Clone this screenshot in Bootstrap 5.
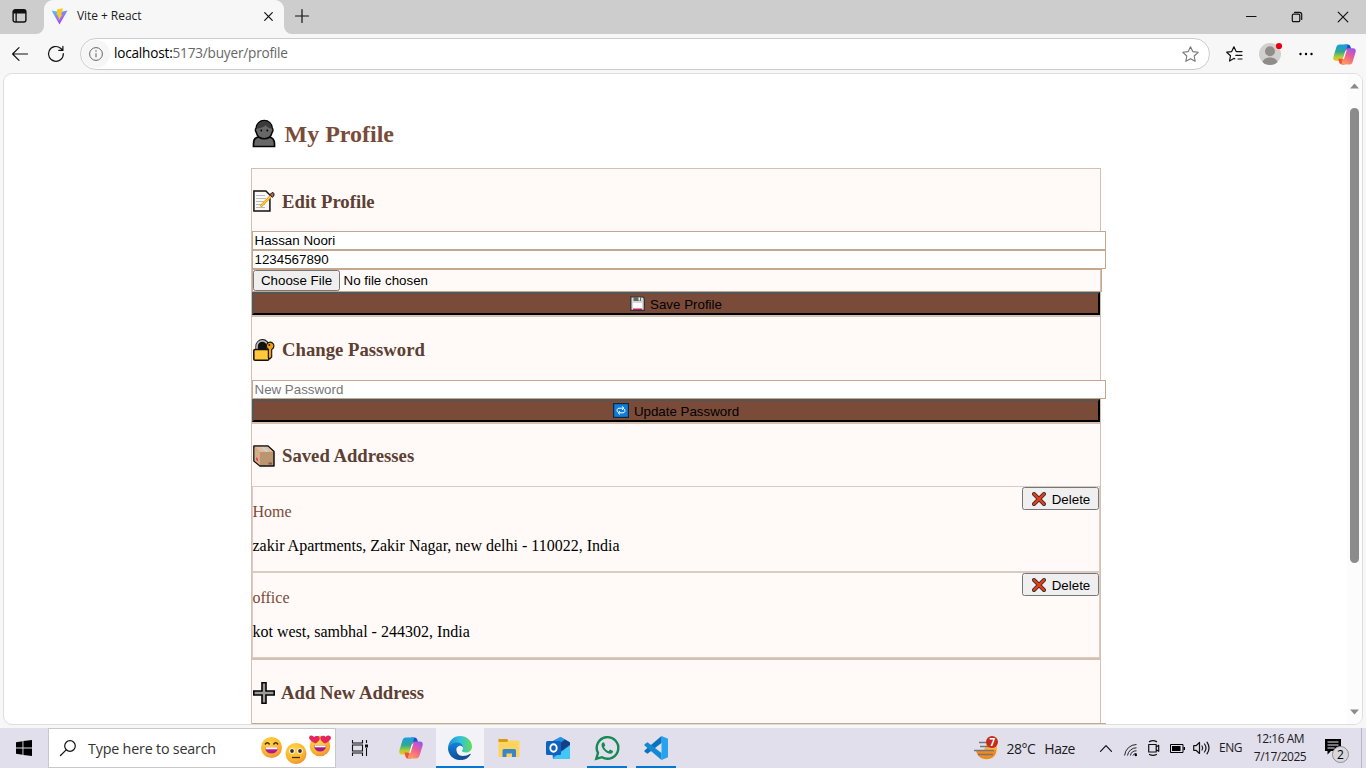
<!DOCTYPE html>
<html lang="en">
<head>
<meta charset="utf-8">
<title>Vite + React</title>
<link href="https://cdn.jsdelivr.net/npm/bootstrap@5.3.0/dist/css/bootstrap.min.css" rel="stylesheet">
<style>
html,body{height:100%;overflow:hidden}
body{background:#f7f7f7;font-family:"Open Sans","Noto Sans",sans-serif;color:#1b1b1b}
svg{display:block;flex:none;overflow:visible}
.shell{width:1366px;height:768px}
.ic{display:flex;align-items:center;justify-content:center;flex:none}
.ln{fill:none;stroke:#111;stroke-width:1.2;stroke-linecap:round;stroke-linejoin:round}
.tabstrip{height:34px;background:#cdcdcd}
.lefttab{width:44px;background:#cdcdcd;border-bottom-right-radius:8px}
.leftwrap,.rightwrap{background:#f7f7f7}
.apptab{width:240px;background:#f7f7f7;border-radius:9px 9px 0 0;font-size:12px;letter-spacing:-.06px}
.afttab{background:#cdcdcd;border-bottom-left-radius:8px}
.toolbar{height:39px;padding-top:1px}
.omnibox{width:1130px;height:32px;border:1px solid #ccc;border-radius:16px;background:#fff;font-size:13.6px;letter-spacing:-.2px;color:#666}
.infodot{width:28px;height:28px;border-radius:50%;background:#f6f6f6}
.viewport-box{height:652px;margin:0 3px;border:1px solid #dedede;border-radius:9px;background:#fff;overflow:hidden}
.scrollgutter{width:15px;background:#fcfcfc}
.thumbbar{width:9px;height:455px;border-radius:5px;background:#8b8b8b}
.doc{width:850px;margin-left:247px;padding-top:43px;font-family:"Liberation Serif",serif;font-size:16px;color:#000}
.doc h2{font-size:24px;font-weight:700;color:#7b4b3a;margin:0;height:34px;line-height:34px}
.panel{width:850px;border:1px solid #d4bfb3;background:#fffaf7}
.panel h3{font-size:18.72px;font-weight:700;color:#5c4033;margin:0;height:62px;padding-left:1px}
.panel h3 svg{margin-right:7px;margin-top:2px}
.panel h3 span{padding-top:4px}
.panel h3.tall{height:63px}
.doc input,.filebox{display:block;border:1px solid #c4a78e;font:13.333px/15px "Liberation Sans",sans-serif;color:#000}
.doc input{width:854px;height:19px;padding:1px 2px 1px 1.5px;background:#fff;border-radius:0;outline:0}
.doc input::placeholder{color:#757575;opacity:1}
.filebox{width:850px;height:23px}
.grey-btn{background:#efefef;border:1px solid #767676;border-radius:2.5px;font:13.333px/15px "Liberation Sans",sans-serif;color:#000;padding:0}
.choose{width:87px;height:21px}
.wide-btn{width:848px;height:23px;border:2px solid;border-color:#555 #000 #000 #555;background:#7b4b3a;font:13.333px/15px "Liberation Sans",sans-serif;color:#000;padding:0}
.wide-btn span,.del span{padding-top:2px}
.addr{height:86px;border:1px solid #dccbc1;line-height:18px}
.addr p{margin:0 0 16px}
.addr-text{padding-top:16px;margin-left:-.5px}
.del{width:77px;height:23px}
.taskbar{height:40px;background:#e2dfed}
.search-box{width:288px;height:40px;background:#fff;border:1px solid #c8c8c8;font-size:14.3px;letter-spacing:-.19px;color:#333}
.app{width:48px;height:40px;margin-right:1px;border-bottom:2px solid transparent;padding-top:2px}
.app.current{background:#f3f2f9;border-color:#0078d4}
.app.open i{display:block}
.app i{display:none;position:absolute;bottom:-2px;left:4px;width:40px;height:2px;background:#0078d4}
.traytxt{font-size:14px;letter-spacing:-.5px}
.clock{width:64px;font-size:12px;line-height:18px;letter-spacing:-.5px;text-align:center;white-space:nowrap}
</style>
</head>
<body>
<svg width="0" height="0" class="position-absolute">
<defs>
<linearGradient id="cpA" x1="0" y1="0" x2="0" y2="1"><stop offset="0" stop-color="#159ee8"/><stop offset=".45" stop-color="#2fa98f"/><stop offset=".75" stop-color="#a9cc3c"/><stop offset="1" stop-color="#f5c518"/></linearGradient>
<linearGradient id="cpB" x1=".8" y1="0" x2=".3" y2="1"><stop offset="0" stop-color="#9a55ee"/><stop offset=".5" stop-color="#ec5f92"/><stop offset="1" stop-color="#ff9a5a"/></linearGradient>
<symbol id="copilot" viewBox="0 0 24 22">
<path d="M12 .5h3.500c1.700 0 2.400 1 2.900 2.600L19.300 6H16c-1.500 0-2.500-1-3-2.500z" fill="#1a4fcb"/>
<path d="M7 .5h6.500c1.500 0 1.700.7 1.300 2L11.500 14c-.8 2.500-1.700 3.500-3.500 3.500H3c-2.500 0-3.300-1.800-2.500-4.500L3.400 3.500C4 1.500 5 .5 7 .5z" fill="url(#cpA)"/>
<path d="M5.500 15.500h3c1.600 0 2.200 1 2.700 2.500l1.100 3.500H9.500c-2 0-2.700-1-3.200-2.600z" fill="#f0533c"/>
<path d="M17 21.500h-6.500c-1.500 0-1.700-.7-1.300-2L12.500 8c.8-2.500 1.700-3.500 3.500-3.500h5c2.500 0 3.300 1.800 2.500 4.500l-2.900 9.500c-.6 2-1.600 3-3.600 3z" fill="url(#cpB)"/>
<path d="M10.600 14.500 12.500 8.300c.4-1.300 1-1.800 2-1.800-.4.700-.8 1.900-1.100 3l-1.500 5c-.3 1-.6 1.500-1.500 1.500-.1-.4 0-.9.200-1.500z" fill="#fff"/>
</symbol>
<radialGradient id="face" cx=".4" cy=".3" r=".8"><stop offset="0" stop-color="#ffd54a"/><stop offset=".6" stop-color="#fbb829"/><stop offset="1" stop-color="#f0803c"/></radialGradient>
<linearGradient id="vt" x1="0" y1="0" x2=".6" y2="1"><stop offset="0" stop-color="#41d1ff"/><stop offset="1" stop-color="#bd34fe"/></linearGradient>
<linearGradient id="ed" x1="0" y1="0" x2="1" y2="0"><stop offset="0" stop-color="#1a8fd8"/><stop offset=".5" stop-color="#2fc2df"/><stop offset="1" stop-color="#66dc55"/></linearGradient>
<linearGradient id="ed2" x1="0" y1="0" x2="0" y2="1"><stop offset="0" stop-color="#1583d8"/><stop offset="1" stop-color="#0b4d9c"/></linearGradient>
<symbol id="cross" viewBox="0 0 14 14"><path d="M2 2l10 10M12 2 2 12" stroke="#333" stroke-width="3.900" stroke-linecap="round"/><path d="M2 2l10 10M12 2 2 12" stroke="#f03a17" stroke-width="2.300" stroke-linecap="round"/></symbol>
</defs>
</svg>
<div class="shell d-flex flex-column">
  <header class="tabstrip d-flex">
    <div class="leftwrap"><div class="lefttab h-100 ic">
      <svg width="15" height="14" viewBox="0 0 15 14" style="margin-left:-5px;margin-top:-2px"><rect x="1.100" y=".8" width="12.800" height="12.200" rx="2" fill="none" stroke="#111" stroke-width="1.400"/><path d="M1 4V2.500Q1 1 2.500 1h10Q14 1 14 2.500V4.500H1zM3.500 4h1.300v9H3.500z" fill="#111"/></svg>
    </div></div>
    <div class="apptab d-flex align-items-center">
      <svg width="17" height="17" viewBox="0 0 17 17" style="margin-left:7px;margin-top:-1px"><path d="M.5 2.500 8.500 16.500 16.500 2.500 8.500 4z" fill="url(#vt)"/><path d="M11.800.2 6 1.400 5.700 7.500l1.600-.3-.5 2.500 1.200-.3-.5 3.400 4-6.400-1.700.3 1.600-3.500z" fill="#ffc81f"/></svg>
      <span style="margin-left:9px;margin-top:-2px">Vite + React</span>
      <svg class="ms-auto" width="9" height="9" viewBox="0 0 9 9" style="margin-right:11px;margin-top:-1px"><path class="ln" stroke-width="1.400" d="M.7.7l7.600 7.600M8.300.7.7 8.300"/></svg>
    </div>
    <div class="rightwrap flex-grow-1"><div class="afttab h-100 d-flex align-items-center">
      <svg width="14" height="14" viewBox="0 0 14 14" style="margin-left:11px;margin-top:-3px"><path class="ln" d="M7 .5v13M.5 7h13"/></svg>
      <div class="ms-auto d-flex" style="margin-top:-1px">
        <div class="ic" style="width:46px"><svg width="10" height="10"><path class="ln" d="M.5 4.500h9.500"/></svg></div>
        <div class="ic" style="width:46px"><svg width="10" height="10" viewBox="0 0 10 10"><rect class="ln" x=".3" y="2.200" width="7.500" height="7.500" rx="1.300"/><path class="ln" d="M2.500.3H7.500Q9.700.3 9.700 2.500V7.500"/></svg></div>
        <div class="ic" style="width:46px"><svg width="10" height="10" viewBox="0 0 10 10"><path class="ln" d="M.2.2l9.600 9.600M9.800.2.2 9.800"/></svg></div>
      </div>
    </div></div>
  </header>
  <nav class="toolbar d-flex align-items-center">
    <div class="ic" style="width:40px"><svg width="16" height="14" viewBox="0 0 16 14"><path class="ln" d="M15.500 7H.7M7 .6.6 7 7 13.400"/></svg></div>
    <div class="ic" style="width:32px"><svg width="16" height="16" viewBox="0 0 16 16"><path class="ln" d="M15.300 7.500A7.400 7.400 0 1 1 12.600 2.200L14.800 4.200M14.900.3V4.400H10.800"/></svg></div>
    <div class="omnibox d-flex align-items-center" style="margin-left:8px">
      <span class="infodot ic" style="margin-left:1px"><svg width="14" height="14" viewBox="0 0 14 14"><circle cx="7" cy="7" r="6.400" fill="none" stroke="#666"/><path d="M7 6.200v4" stroke="#666" stroke-width="1.100"/><circle cx="7" cy="4" r=".8" fill="#666"/></svg></span>
      <span style="margin-left:4px;margin-top:-1px"><span class="text-black">localhost:</span>5173/buyer/profile</span>
      <svg class="ms-auto" width="17" height="16" viewBox="0 0 17 16" style="margin-right:10px"><path fill="none" stroke="#777" stroke-width="1.100" stroke-linejoin="round" d="M8.500.7l2.300 4.900 5.400.7-4 3.700 1 5.300-4.700-2.600-4.700 2.600 1-5.300-4-3.700 5.400-.7z"/></svg>
    </div>
    <div class="ic" style="width:48px"><svg width="17" height="16" viewBox="0 0 17 16"><path class="ln" d="M8.800 12.800 7.800 12.400 3.500 15l1-5.200L.7 6.200l5-.6L7.900.8l2 4.300M10.300 5.600H16M9.800 9.300H16M12 13H16"/></svg></div>
    <div class="ic" style="width:24px"><svg width="22" height="22" viewBox="0 0 22 22"><clipPath id="av"><circle cx="11" cy="11" r="11"/></clipPath><circle cx="11" cy="11" r="11" fill="#d2d0ce"/><g clip-path="url(#av)" fill="#8f8c89"><circle cx="11" cy="8.300" r="5"/><path d="M3 22c0-5 3-7.500 8-7.500s8 2.500 8 7.500z"/></g><circle cx="20" cy="3" r="3.100" fill="#e60012"/></svg></div>
    <div class="ic" style="width:48px"><svg width="14" height="4" viewBox="0 0 14 4"><circle cx="1.500" cy="2" r="1.200"/><circle cx="7" cy="2" r="1.200"/><circle cx="12.500" cy="2" r="1.200"/></svg></div>
    <div class="ic" style="width:28px"><svg width="23" height="21"><use href="#copilot"/></svg></div>
  </nav>
  <div class="viewport-box d-flex">
    <main class="flex-grow-1 overflow-hidden"><div class="doc">
      <h2 class="d-flex align-items-center"><svg width="27" height="28" viewBox="0 0 27 28" style="margin-right:6.500px"><path d="M2.500 26.500V24c0-5 2.500-7 6-7h8.500c4 0 6.500 2 6.500 7v2.500z" fill="#686767" stroke="#050505" stroke-width="1.700"/><path d="M5.200 8a8 7.500 0 0 1 16 0c1.200 1 .8 3.200 0 4.200-1 4-4 6.500-8 6.500s-7-2.500-8-6.500c-.8-1-1.200-3.200 0-4.200z" fill="#686767" stroke="#050505" stroke-width="1.500"/><path d="M5.700 8.500C6 3.500 9.200 1.500 13.200 1.500c4.400 0 7.300 2.600 7.500 7-3-.5-5-1.800-6-3.600C12.800 7.500 8.500 8 5.700 8.500z" fill="#3a3a3a"/><circle cx="10.300" cy="10.500" r=".9" fill="#000"/><circle cx="16.300" cy="10.500" r=".9" fill="#000"/></svg><span>My Profile</span></h2>
      <section class="panel" style="margin-top:17px;height:148px">
        <h3 class="d-flex align-items-center"><svg width="22" height="22" viewBox="0 0 22 22"><path d="M.9 1h12l4 4v16H.9z" fill="#f8f8f8" stroke="#111" stroke-width="1.500"/><path d="M3 5.500h9M3 8.500h10M3 11.500h9M3 14.500h9M3 17.500h9" stroke="#bbb"/><path d="M7.500 16.500 18 6" stroke="#e9a923" stroke-width="2.600"/><path d="M8 16.200 17.500 6.500" stroke="#ffd65c" stroke-width="1"/><path d="M17 4.500 18.500 3q2-1.300 2.500.8L20.800 6l-1.500 1.300z" fill="#b66" stroke="#111"/></svg><span>Edit Profile</span></h3>
        <input value="Hassan Noori"><input value="1234567890">
        <div class="filebox d-flex align-items-center"><button class="grey-btn choose">Choose File</button><span style="margin-left:3.500px">No file chosen</span></div>
        <button class="wide-btn d-flex align-items-center justify-content-center"><svg width="15" height="15" viewBox="0 0 15 15" style="margin-right:5px"><path d="M.8.8h12l1.500 1.500v12H.8z" fill="#d8d8d8" stroke="#333" stroke-width="1.300"/><path d="M3.500 1h7.500v4H3.500z" fill="#666"/><path d="M8.500 1.500h1.500v3H8.500z" fill="#eee"/><path d="M3 7h9v6H3z" fill="#fff"/><path d="M3 12.500h9V14H3z" fill="#c2185b"/></svg><span>Save Profile</span></button>
      </section>
      <section class="panel" style="height:107px">
        <h3 class="tall d-flex align-items-center"><svg width="22" height="22" viewBox="0 0 22 22"><path d="M4.500 11V7.300a5 5.200 0 0 1 10 0V11" fill="#111" stroke="#111" stroke-width="4.200"/><path d="M4 11V7.300a5.300 5.500 0 0 1 10.600 0V11" fill="none" stroke="#b8b8b8" stroke-width="1.700"/><rect x=".8" y="10.500" width="15" height="10.700" rx="1.300" fill="#ffc83d" stroke="#111" stroke-width="1.500"/><path d="M15.500 3.500a3.800 3.800 0 1 1 3.200 6.900V18l-1.900 2-1.500-1.500v-8.300A3.800 3.800 0 0 1 15.500 3.500z" fill="#f0a30a" stroke="#111" stroke-width="1.100"/><circle cx="16.300" cy="6" r="1" fill="#222"/></svg><span>Change Password</span></h3>
        <input placeholder="New Password">
        <button class="wide-btn d-flex align-items-center justify-content-center"><svg width="16" height="15" viewBox="0 0 16 15" style="margin-right:5px"><rect x=".6" y=".6" width="14.800" height="13.800" fill="#0f7ddb" stroke="#16263a" stroke-width="1.200"/><path d="M4.500 9Q3.200 5.500 6 5.200h4.500M9 3.500l2 1.700L9 7M11.500 6q1.300 3.500-1.500 3.800H5.500M7 8 5 9.800l2 1.700" fill="none" stroke="#fff"/></svg><span>Update Password</span></button>
      </section>
      <section class="panel" style="height:236px">
        <h3 class="d-flex align-items-center"><svg width="22" height="22" viewBox="0 0 22 22"><path d="M.9 1 15 1l6 5.500V21H7L.9 16z" fill="#bd9470" stroke="#111" stroke-width="1.500" stroke-linejoin="round"/><path d="M1.600 1.700 14.700 1.700 20.200 6.700 7 7z" fill="#e0bd9c"/><path d="M1.600 1.900 7 7v13.200L1.600 15.700z" fill="#d5ad8b"/><path d="M7.500 2h3.200l5.500 4.800h-3.500z" fill="#c9d2d5"/><path d="M3 12l2 1.500v3L3 15z" fill="#e74856"/><path d="M15.500 17.500h3.500v2h-3.500z" fill="#805f49"/></svg><span style="padding-top:3px">Saved Addresses</span></h3>
        <div class="addr d-flex align-items-start justify-content-between"><div class="addr-text"><p style="color:#7b4b3a">Home</p><p>zakir Apartments, Zakir Nagar, new delhi - 110022, India</p></div><button class="grey-btn del d-flex align-items-center justify-content-center"><svg width="14" height="14" style="margin:1px 6px 0 1px"><use href="#cross"/></svg><span>Delete</span></button></div>
        <div class="addr d-flex align-items-start justify-content-between"><div class="addr-text"><p style="color:#7b4b3a">office</p><p>kot west, sambhal - 244302, India</p></div><button class="grey-btn del d-flex align-items-center justify-content-center"><svg width="14" height="14" style="margin:1px 6px 0 1px"><use href="#cross"/></svg><span>Delete</span></button></div>
      </section>
      <section class="panel" style="height:150px">
        <h3 class="tall d-flex align-items-center"><svg width="22" height="22" viewBox="0 0 22 22" style="margin-right:6px"><path d="M9 .8h4V9h8.200v4H13v8.200H9V13H.8V9H9z" fill="#9b9b9b" stroke="#050505" stroke-width="1.600"/></svg><span>Add New Address</span></h3>
        <input>
      </section>
    </div></main>
    <aside class="scrollgutter d-flex flex-column align-items-center flex-shrink-0">
      <svg width="9" height="6" style="margin-top:9px"><path d="M0 5.500 4.500.5 9 5.500z" fill="#8b8b8b"/></svg>
      <div class="thumbbar" style="margin-top:19px"></div>
      <svg width="9" height="6" class="mt-auto" style="margin-bottom:9px"><path d="M0 .5h9L4.500 5.500z" fill="#8b8b8b"/></svg>
    </aside>
  </div>
  <footer class="taskbar d-flex align-items-stretch mt-auto">
    <div class="ic" style="width:48px"><svg width="16" height="16" viewBox="0 0 16 16"><path d="M0 2.200 6.500 1.200V7.500H0zM7.400 1.100 16 0v7.500H7.400zM0 8.400h6.500v6.300L0 13.800zM7.400 8.400H16V16l-8.600-1.100z"/></svg></div>
    <div class="search-box d-flex align-items-center">
      <svg width="16" height="16" viewBox="0 0 16 16" style="margin-left:11px"><circle class="ln" cx="10" cy="6" r="5.300"/><path class="ln" d="M6.200 9.800.5 15.500"/></svg>
      <span style="margin-left:12px;margin-top:2px">Type here to search</span>
      <svg class="ms-auto" width="70" height="30" viewBox="0 0 70 30" style="margin-right:4px"><g fill="url(#face)"><circle cx="10.500" cy="14.500" r="10.500"/><circle cx="35" cy="20.500" r="10.500"/><circle cx="59" cy="13" r="10.300"/></g><path d="M4 11.500q2.300-3.500 4.600 0M12.400 11.500q2.300-3.500 4.600 0" fill="none" stroke="#50261f" stroke-width="1.500"/><path d="M3.800 14.500h13.400q-1 6-6.700 6t-6.700-6z" fill="#b3188c"/><path d="M4.500 14.300h12v2h-12z" fill="#fff"/><circle cx="31" cy="18" r="2.800" fill="#fff"/><circle cx="39" cy="18" r="2.800" fill="#fff"/><circle cx="31" cy="18" r="1.900" fill="#402a32"/><circle cx="39" cy="18" r="1.900" fill="#402a32"/><path d="M31 24.500h8" stroke="#402a32" stroke-width="1.300"/><path d="M54.500 10.500C47 7 47.500 4 49 3s3.500 0 4 1.300c1-1.500 4-2 5.300-.3s-.4 4.500-3.800 6.500zM64 10.500C60 8.500 58.500 5.500 59.800 3.800s4-1.300 4.700.2c1-1.500 3.500-2 4.800-.8S70.500 7.500 64 10.500z" fill="#e5255f"/><path d="M52.700 12.500h12.800q-1 6-6.400 6t-6.400-6z" fill="#a4188c"/><path d="M53.500 12.500h11.200v1.800H53.500z" fill="#fff"/></svg>
    </div>
    <div class="ic" style="width:51px;padding-right:3px"><svg width="16" height="16" viewBox="0 0 16 16"><path d="M.5 0v3h10V0M.5 16v-3h10v3M.5 5h10v6H.5zM14.500 0v3M14.500 8v8" fill="none" stroke="#111" stroke-width="1.100"/><path d="M13 4.500h3v3h-3z" fill="#111"/></svg></div>
    <div class="app ic"><svg width="24" height="22"><use href="#copilot"/></svg></div>
    <div class="app ic current"><svg width="24" height="24" viewBox="0 0 24 24"><path d="M0 12C.5 4.500 6 0 12 0c7 0 12 5 12 10.500 0 4-3 6-6 6-2.500 0-4-.8-4-1.700 0-.7 1-1.200 1-3C15 9 12.500 7.500 9.500 7.500 5 7.500 1.500 9.500 0 12z" fill="url(#ed)"/><path d="M0 12C1 9 4.500 6.500 9 6.500c3.500 0 6 2 6 5-1-1.500-2.500-2-4-1.500-2.500 1-3.500 4-2.500 7 1 3.500 3.500 6 6.500 6.500C6.500 25.500 0 19.500 0 12z" fill="url(#ed2)"/><path d="M9 12.500c-1.500 4 1.500 7.500 6 7.500 2.500 0 4.800-.8 7-2.200.5-.3.900.1.600.6C20.500 22 17.500 23.700 14 23.900 9 22 6.500 17 9 12.500z" fill="#115095"/></svg></div>
    <div class="app ic"><svg width="22" height="18" viewBox="0 0 22 18"><path d="M.5.5Q.5 0 1 0h8l1.500 1.500H21q.5 0 .5.500v15q0 1-1 1h-19q-1 0-1-1z" fill="#ffd35e"/><path d="M.5 0h8.700l1 1.500-1 1.500H.5z" fill="#d99a13"/><path d="M4.500 18v-6.500q0-1.500 1.500-1.500h10.500q1.500 0 1.500 1.500V18h-4v-3.500H8.500V18z" fill="#3786c8"/></svg></div>
    <div class="app ic"><svg width="24" height="22" viewBox="0 0 24 22"><path d="M5 6q0-1 1-1.600L13.500.4q1-.5 2 0L23 4.800q1 .6 1 1.700V20q0 2-2 2H7z" fill="#1577d2"/><path d="M24 5.500v3L16 14 8 8l10-6z" fill="#123f86"/><path d="M6 4.500 14.500 0 19 2.500 10 9z" fill="#2593e5"/><path d="M24 8v12q0 2-2 2H8.500q-1.500 0-1.500-1z" fill="#42c6f5"/><rect y="4" width="15" height="14" rx="1.500" fill="#0f63be"/><ellipse cx="7.500" cy="11" rx="3.200" ry="3.700" fill="none" stroke="#fff" stroke-width="1.900"/></svg></div>
    <div class="app ic open position-relative"><svg width="24" height="24" viewBox="0 0 24 24"><path d="M1.300 22.700 3 17A10.800 10.800 0 1 1 7 21.200z" fill="none" stroke="#168a53" stroke-width="2.400"/><path d="M8.300 6.300c-.9.300-1.800 1.200-1.800 2.700 0 4 5 8.700 9 8.700 1.600 0 2.500-1.200 2.500-2.700l-3-1.500-1.500 1.700c-2-.8-3.600-2.400-4.500-4.200L10.300 9.500 9.200 6.700q-.2-.5-.9-.4z" fill="#168a53"/></svg><i></i></div>
    <div class="app ic open position-relative"><svg width="24" height="24" viewBox="0 0 24 24"><path d="M17.500 0 24 2.700v18.600L17.500 24z" fill="#27a2ee"/><path d="M17.500 0v7L3.500 17.800.5 15.700v-1.200z" fill="#0b72bd"/><path d="M17.500 24v-7L3.500 6.200.5 8.300v1.200z" fill="#1389d3"/></svg><i></i></div>
    <div class="ms-auto d-flex align-items-stretch">
      <div class="d-flex align-items-center traytxt" style="width:120px">
        <svg width="26" height="24" viewBox="0 0 26 24" style="margin-left:1px;margin-right:6.500px"><path d="M2 14h20.500c0 5-4 9.300-10 9.300S2.500 19 2 14z" fill="#f18b1c"/><path d="M14 5h6l3 6v3H10z" fill="#fbb13a"/><path d="M5 6.500h9M6 10.500h15M0 14.500h20M4 18.500h15" stroke="#77747a" stroke-width="1.600"/><circle cx="18" cy="6" r="6" fill="#c42b1c"/><text x="18" y="9.600" font-size="10" font-weight="700" fill="#fff" text-anchor="middle">7</text></svg>
        <span>28°C</span><span style="margin-left:9px">Haze</span></div>
      <div class="ic" style="width:25px"><svg width="12" height="7"><path class="ln" d="M.5 6.300 6 .7l5.500 5.600"/></svg></div>
      <div class="ic" style="width:24px"><svg width="13" height="13" viewBox="0 0 13 13" style="margin-top:2px"><g fill="none" stroke="#222"><path d="M.6 12.500A12 12 0 0 1 12.500 1.500M3.500 12.500a9 9 0 0 1 9-7.700M6.400 12.500a6 6 0 0 1 6.100-4.700M9 12.500a3.300 3.300 0 0 1 3.500-2"/></g><circle cx="11.800" cy="12" r="1.200"/></svg></div>
      <div class="ic" style="width:23px"><svg width="12" height="16" viewBox="0 0 12 16"><path class="ln" d="M.7 4.500h7.500v7.500H.7zM8.200 7l2.500-1.700v6L8.200 9.700M1.500 1.600Q5-.3 8.500 1.600M1.500 14.500q3.500 1.800 7 0"/></svg></div>
      <div class="ic" style="width:24px"><svg width="15" height="9" viewBox="0 0 15 9"><path d="M.5.5h12.500v8H.5z" fill="none" stroke="#000"/><path d="M2 2h8.500v5H2zM13.500 3H15v3h-1.500z"/></svg></div>
      <div class="ic" style="width:24px"><svg width="17" height="14" viewBox="0 0 17 14"><path class="ln" d="M.7 4.700H3L6.500 1.500v11L3 9.300H.7zM9 5q1.500 2 0 4M11.500 3q3 4 0 8M14 1.200q4 5.800 0 11.600"/></svg></div>
      <div class="ic" style="width:35px;font-size:12px;letter-spacing:-.5px">ENG</div>
      <div class="clock" style="padding-top:2px">12:16 AM<br>7/17/2025</div>
      <div class="ic" style="width:49px"><svg width="26" height="24" viewBox="0 0 26 24" style="margin-top:4px"><path d="M1 1h16v12H7l-3.500 3.500V13H1z"/><path d="M3.500 4h11M3.500 7h11M3.500 10h7" stroke="#e8e6ef" stroke-width="1.200"/><circle cx="16.500" cy="16.500" r="8" fill="#d8d8dc" stroke="#8e8e94"/><text x="16.500" y="20.800" font-size="12" text-anchor="middle">2</text></svg></div>
      <div style="width:5px;border-left:1px solid #b9b6c6"></div>
    </div>
  </footer>
</div>
<script src="https://cdn.jsdelivr.net/npm/bootstrap@5.3.0/dist/js/bootstrap.bundle.min.js"></script>
</body>
</html>
